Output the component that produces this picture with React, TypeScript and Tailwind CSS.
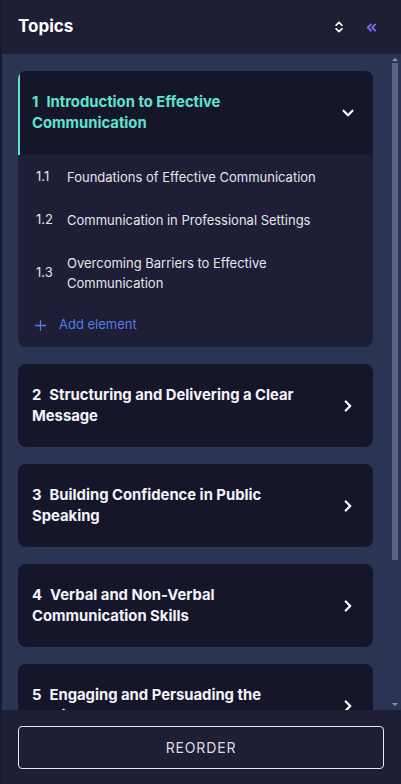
import { ChevronDown, ChevronRight, ChevronsUpDown, ChevronsLeft, Plus } from 'lucide-react';

type Topic = {
    num: number;
    title: string;
};

const subTopics = [
    { num: '1.1', title: 'Foundations of Effective Communication' },
    { num: '1.2', title: 'Communication in Professional Settings' },
    { num: '1.3', title: 'Overcoming Barriers to Effective Communication' },
];

const topics: Topic[] = [
    { num: 2, title: 'Structuring and Delivering a Clear Message' },
    { num: 3, title: 'Building Confidence in Public Speaking' },
    { num: 4, title: 'Verbal and Non-Verbal Communication Skills' },
    { num: 5, title: 'Engaging and Persuading the Audience' },
];

const TopicCard = ({ topic }: { topic: Topic }) => (
    <div className="shrink-0 h-[83px] rounded-lg bg-[#16162b] flex items-center pl-[14px] pr-[16px]">
        <p className="flex-1 text-[14.8px] leading-[21px] font-bold text-[#f4f4f8] pr-6">
            <span className="mr-[8px]">{topic.num}</span>
            {topic.title}
        </p>
        <ChevronRight size={18} strokeWidth={3} className="text-white shrink-0" />
    </div>
);

const App = () => {
    return (
        <div
            className="w-[401px] h-[784px] flex flex-col bg-[#1e1e35] border-l-2 border-[#141a30] overflow-hidden"
            style={{ fontFamily: 'Inter, "Noto Sans", sans-serif' }}
        >
            <div className="h-[54px] shrink-0 flex items-center pl-4 pr-[22px]">
                <h1 className="flex-1 text-[17px] font-bold text-white">Topics</h1>
                <ChevronsUpDown size={14} strokeWidth={3} className="text-white mr-[18px]" />
                <ChevronsLeft size={15} strokeWidth={3} className="text-[#7c6cf2]" />
            </div>

            <div className="flex-1 min-h-0 flex bg-[#2b3553]">
                <div className="flex-1 min-w-0 overflow-hidden flex flex-col gap-[17px] pt-[17px] pl-4 pr-[17px]">
                    <div className="shrink-0 rounded-lg overflow-hidden bg-[#1e1e36]">
                        <div className="h-[84px] bg-[#16162b] border-l-2 border-[#5fe3cf] flex items-center pl-3 pr-[16px]">
                            <p className="flex-1 text-[14.8px] leading-[21px] font-bold text-[#5fe3cf] pr-6">
                                <span className="mr-[8px]">1</span>
                                Introduction to Effective Communication
                            </p>
                            <ChevronDown size={18} strokeWidth={3} className="text-white shrink-0" />
                        </div>
                        <div className="pb-[9px]">
                            {subTopics.map((s) => (
                                <div key={s.num} className="flex items-center py-[11.5px] pl-[18px] pr-6">
                                    <span className="w-[31px] shrink-0 text-[13px] text-[#e4e4ec]">{s.num}</span>
                                    <span className="text-[13px] leading-[20px] text-[#e4e4ec]">{s.title}</span>
                                </div>
                            ))}
                            <div className="flex items-center gap-[10px] pl-[14px] mt-[8px] h-[26px]">
                                <Plus size={17} strokeWidth={1.8} className="text-[#4f7fe0]" />
                                <span className="text-[13px] text-[#4f7fe0]">Add element</span>
                            </div>
                        </div>
                    </div>

                    {topics.map((t) => (
                        <TopicCard key={t.num} topic={t} />
                    ))}
                </div>

                <div className="w-[10px] shrink-0 flex flex-col items-center pt-[4px] pb-[4px] mr-[1px]">
                    <div className="w-0 h-0 border-l-[3px] border-r-[3px] border-b-[3px] border-l-transparent border-r-transparent border-b-[#8a93b0]" />
                    <div className="w-[6px] h-[497px] mt-[2px] bg-[#5b6486]" />
                    <div className="flex-1" />
                    <div className="w-0 h-0 border-l-[3px] border-r-[3px] border-t-[3px] border-l-transparent border-r-transparent border-t-[#8a93b0]" />
                </div>
            </div>

            <div className="h-[74px] shrink-0 flex items-center pl-4 pr-[17px]">
                <button className="w-full h-[43px] rounded-[4px] border border-[#e8e8f0] text-[14px] tracking-[0.06em] text-[#dcdce6]">
                    REORDER
                </button>
            </div>
        </div>
    );
};

export default App;
